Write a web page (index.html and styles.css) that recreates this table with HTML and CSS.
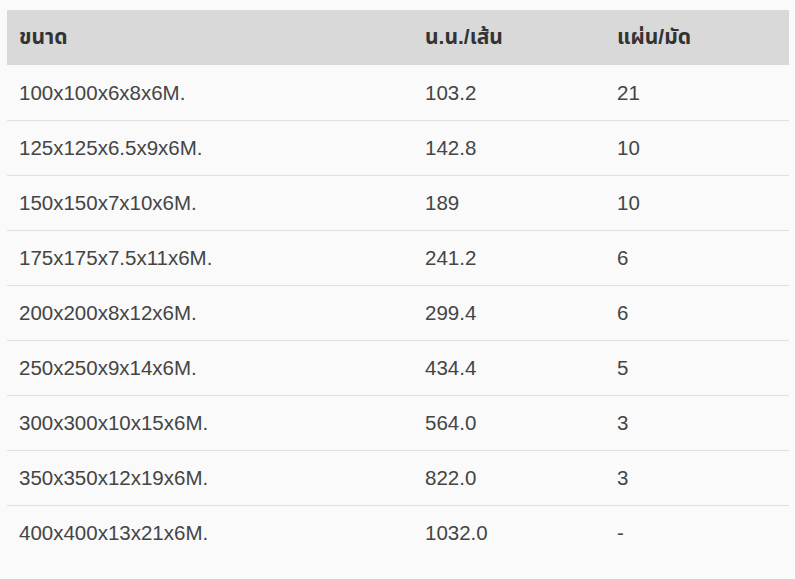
FILE: index.html
```html
<!DOCTYPE html>
<html lang="th">
<head>
<meta charset="utf-8">
<link rel="stylesheet" href="styles.css">
</head>
<body>
<div class="wrap">
<table class="spec">
<colgroup><col class="c1"><col class="c2"><col class="c3"></colgroup>
<thead>
<tr><th>ขนาด</th><th>น.น./เส้น</th><th>แผ่น/มัด</th></tr>
</thead>
<tbody>
<tr><td>100x100x6x8x6M.</td><td>103.2</td><td>21</td></tr>
<tr><td>125x125x6.5x9x6M.</td><td>142.8</td><td>10</td></tr>
<tr><td>150x150x7x10x6M.</td><td>189</td><td>10</td></tr>
<tr><td>175x175x7.5x11x6M.</td><td>241.2</td><td>6</td></tr>
<tr><td>200x200x8x12x6M.</td><td>299.4</td><td>6</td></tr>
<tr><td>250x250x9x14x6M.</td><td>434.4</td><td>5</td></tr>
<tr><td>300x300x10x15x6M.</td><td>564.0</td><td>3</td></tr>
<tr><td>350x350x12x19x6M.</td><td>822.0</td><td>3</td></tr>
<tr><td>400x400x13x21x6M.</td><td>1032.0</td><td>-</td></tr>
</tbody>
</table>
</div>
</body>
</html>
```
FILE: styles.css
```css
html, body {
  margin: 0;
  padding: 0;
  background: #fafafa;
}
.wrap {
  padding: 10px 6px 0 7px;
}
.spec {
  width: 782px;
  border-collapse: collapse;
  table-layout: fixed;
  font-family: "Liberation Sans", "Noto Sans Thai", "Noto Sans", sans-serif;
  font-size: 20.5px;
  color: #454545;
}
.c1 { width: 406px; }
.c2 { width: 192px; }
.c3 { width: 184px; }
.spec th {
  background: #d9d9d9;
  color: #333;
  font-weight: bold;
  font-size: 21px;
  text-align: left;
  height: 55px;
  padding: 0 12px;
  box-sizing: border-box;
}
.spec td {
  height: 55px;
  padding: 1px 12px 0;
  box-sizing: border-box;
  text-align: left;
  vertical-align: middle;
}
.spec tbody tr + tr td {
  border-top: 1px solid #e0e0e0;
}
```
